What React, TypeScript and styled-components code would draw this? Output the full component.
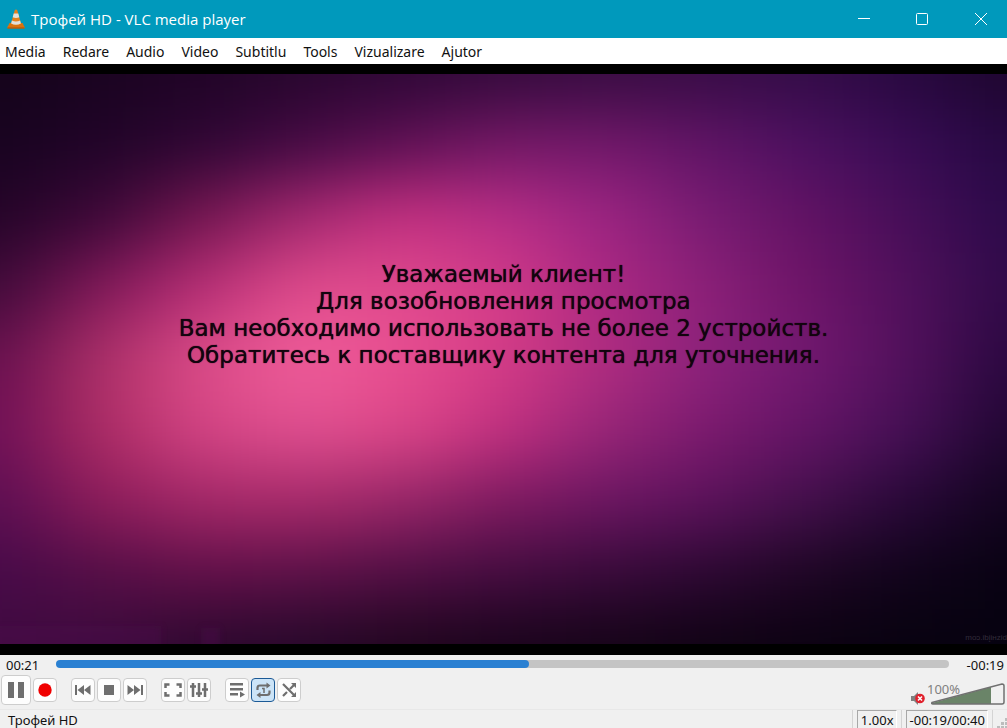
import React from "react";
import styled, { createGlobalStyle } from "styled-components";

const GlobalStyle = createGlobalStyle`
  *, *::before, *::after { box-sizing: border-box; }
  body { margin: 0; background: #f0f0f0; }
`;

const uiFont = `"Noto Sans", "Open Sans", sans-serif`;

const Shell = styled.div`
  display: flex;
  flex-direction: column;
  height: 100vh;
  overflow: hidden;
  background: #f0f0f0;
`;

const TitleBar = styled.header`
  display: flex;
  align-items: center;
  flex: none;
  height: 38px;
  padding-left: 7px;
  background: #0099bc;
  color: #fff;
  font-family: "Open Sans", "Noto Sans", sans-serif;
`;

const Title = styled.h1`
  flex: 1;
  margin: 0 0 0 6px;
  font-size: 15px;
  font-weight: 400;
  line-height: 20px;
`;

const WindowButton = styled.button`
  display: grid;
  place-items: center;
  width: 58px;
  height: 38px;
  padding: 0;
  border: 0;
  background: transparent;
  color: #fff;
  &:last-child { width: 56px; padding-left: 4px; }
`;

const MenuBar = styled.nav`
  display: flex;
  align-items: center;
  flex: none;
  gap: 17px;
  height: 26px;
  padding: 2px 0 0 5px;
  background: #fff;
`;

const MenuItem = styled.button`
  padding: 0;
  border: 0;
  background: transparent;
  color: #111;
  font: 14px/20px ${uiFont};
`;

const Stage = styled.main`
  display: flex;
  flex: 1;
  min-height: 0;
  padding: 10px 0 11px;
  background: #000;
`;

const Video = styled.section`
  position: relative;
  flex: 1;
  overflow: hidden;
  background: #2a0632;
`;

const Backdrop = styled.svg`
  position: absolute;
  inset: 0;
  width: 100%;
  height: 100%;
`;

const Message = styled.p`
  position: relative;
  margin: 0;
  padding-top: 187px;
  color: #12040e;
  font: 23px/27px "DejaVu Sans", sans-serif;
  text-align: center;
  text-shadow: 0 0 1px #12040e;
`;

const Watermark = styled.span`
  position: absolute;
  right: 0;
  bottom: 0;
  color: #322c3a;
  font: 8px/12px "Liberation Sans", sans-serif;
`;

const SeekRow = styled.div`
  display: flex;
  align-items: center;
  flex: none;
  height: 20px;
  padding: 0 3px 0 6px;
  color: #111;
  font: 13px/18px ${uiFont};
`;

const SeekSlider = styled.input<{ $value: number }>`
  appearance: none;
  flex: 1;
  height: 8px;
  margin: 0 18px 2px 17px;
  border-radius: 4px;
  background: linear-gradient(
    to right,
    #2a80d2 ${(p) => p.$value}%,
    #c4c4c4 ${(p) => p.$value}%
  );
  &::-webkit-slider-thumb {
    appearance: none;
    width: 8px;
    height: 8px;
    border-radius: 0 4px 4px 0;
    background: #2a80d2;
  }
`;

const Controls = styled.div`
  display: flex;
  align-items: center;
  flex: none;
  gap: 14px;
  height: 30px;
  padding: 0 2px 0 1px;
`;

const Group = styled.div`
  display: flex;
  align-items: center;
  gap: 2px;
`;

const ToolButton = styled.button<{ $large?: boolean; $active?: boolean }>`
  display: grid;
  place-items: center;
  width: ${(p) => (p.$large ? 30 : 24)}px;
  height: ${(p) => (p.$large ? 30 : 24)}px;
  padding: 0;
  border: 1px solid ${(p) => (p.$active ? "#1c5a96" : "#cdcdcd")};
  border-radius: 4px;
  background: ${(p) => (p.$active ? "#cce4f7" : "#fdfdfd")};
  color: #6e6e6e;
`;

const Volume = styled.div`
  display: flex;
  align-items: flex-end;
  align-self: flex-end;
  gap: 6px;
  margin-left: auto;
`;

const MuteButton = styled.button`
  display: block;
  padding: 0;
  border: 0;
  background: transparent;
  line-height: 0;
`;

const VolumeMeter = styled.label`
  position: relative;
  width: 74px;
  height: 24px;
`;

const VolumeText = styled.span`
  position: absolute;
  left: -4px;
  top: 0;
  color: #808080;
  font: 13px/16px ${uiFont};
`;

const VolumeSlider = styled.input`
  position: absolute;
  inset: 0;
  width: 100%;
  height: 100%;
  margin: 0;
  opacity: 0;
`;

const VolumeShape = styled.svg`
  position: absolute;
  inset: 0;
`;

const StatusBar = styled.footer`
  display: flex;
  flex: none;
  height: 19px;
  margin-top: 4px;
  border-top: 1px solid #e8e8e8;
  color: #111;
  font: 13px/18px ${uiFont};
  white-space: nowrap;
`;

const StatusTitle = styled.span`
  flex: 1;
  padding: 1px 0 0 8px;
`;

const StatusDivider = styled.i`
  width: 1px;
  margin-right: 4px;
  background: #d4d4d4;
`;

const StatusBox = styled.output`
  margin-right: 4px;
  padding: 0 2px 0 3px;
  border: 1px solid #a8a8a8;
  border-right-color: #fff;
  border-bottom: 0;
`;

/* Colours of the still frame on an even grid, blended together by blur. */
const frame = [
  "14041a 1a0420 200426 28062e 2e0736 340a3c 380c42 380c46 340c48 280840 1e062e",
  "180420 200428 2e0634 450a44 5e1054 741866 72186a 601466 4c1060 380c54 260842",
  "240428 3c0838 741650 a42870 c43080 b82e86 9c2482 781c72 621264 460e58 2c0a4a",
  "400a3a 801858 b82e76 e04c8c e04a8e d23a88 ac2882 8c2078 6e1468 50105c 300a48",
  "68104e ac3068 dc4c88 f05e9a e84e90 d43c86 b02c80 8c227c 721870 52105c 2a0840",
  "701056 ac2c64 d44484 e05090 dc4688 c23080 982678 7c1a6e 641466 461056 200632",
  "5c0e52 8c1c5a a42868 a82a6a 982668 7e1a60 6c1662 5c125c 44104c 280838 12041e",
  "460a48 540e46 600f48 5c1048 500e44 440c40 380a3a 2c0832 1e0624 10041a 080212",
  "400a40 3c0a3c 2c082e 26082a 20061e 1a041c 160418 100314 0c0212 080210 060210",
].map((row) => row.split(" "));

const clampEdge = <T,>(list: T[]) => [list[0], ...list, list[list.length - 1]];

function FrameArt() {
  return (
    <Backdrop viewBox="0 0 1000 568" preserveAspectRatio="none" aria-hidden="true">
      <filter
        id="blend"
        filterUnits="userSpaceOnUse"
        x="-150"
        y="-110"
        width="1300"
        height="790"
        colorInterpolationFilters="sRGB"
      >
        <feGaussianBlur stdDeviation="42 31" />
      </filter>
      <filter id="soften"><feGaussianBlur stdDeviation="3" /></filter>
      <g filter="url(#blend)" shapeRendering="crispEdges">
        {clampEdge(frame).map((row, r) =>
          clampEdge(row).map((c, i) => (
            <rect
              key={`${r}-${i}`}
              x={(i - 1) * 100 - 50}
              y={(r - 1) * 71 - 36}
              width="101"
              height="72"
              fill={`#${c}`}
            />
          ))
        )}
      </g>
      <path d="M-20 550h180v40H-20zM200 552h18v30h-18z" fill="#4c0e4c" opacity=".4" filter="url(#soften)" />
    </Backdrop>
  );
}

const Cone = () => (
  <svg width="18" height="20" viewBox="0 0 18 20" aria-hidden="true">
    <path d="M2.500 14h13l2.300 4.500q0 1-1 1H1.200q-1 0-1-1z" fill="#d9730f" />
    <path d="M.5 18.500h17v1H.5z" fill="#a9540a" />
    <path d="M7.800 1q1.200-.8 2.400 0L14 14.500q-5 3-10 0z" fill="#e5821c" />
    <path d="M6.700 4.500h4.600l1 3.800q-3.300 1.400-6.600 0zM4.900 11.500q4.100 1.800 8.200 0l.8 3q-4.900 2.400-9.800 0z" fill="#e2e0da" />
  </svg>
);

const icons = {
  pause: (
    <svg width="18" height="18" fill="currentColor">
      <path d="M1 1h6v16H1zM11 1h6v16h-6z" />
    </svg>
  ),
  record: (
    <svg width="14" height="14"><circle cx="7" cy="7" r="6.700" fill="#f00000" /></svg>
  ),
  prev: (
    <svg width="16" height="10" fill="currentColor">
      <path d="M0 0h2v10H0zM9 0v10L2.500 5zM15.500 0v10L9 5z" />
    </svg>
  ),
  stop: (
    <svg width="10" height="10" fill="currentColor"><path d="M0 0h10v10H0z" /></svg>
  ),
  next: (
    <svg width="16" height="10" fill="currentColor">
      <path d="M14 0h2v10h-2zM7 0v10l6.500-5zM.5 0v10L7 5z" />
    </svg>
  ),
  full: (
    <svg width="18" height="14" fill="none" stroke="currentColor" strokeWidth="2.500">
      <path d="M1.500 5V1.500h4M12.500 1.500h4V5M16.500 9v3.500h-4M5.500 12.500h-4V9" />
    </svg>
  ),
  mixer: (
    <svg width="18" height="14" fill="none" stroke="currentColor" strokeWidth="2.500">
      <path d="M3 0v14M9 0v14M15 0v14" />
      <path d="M0 3.500h6M6 10.500h6M12 6.500h6" />
    </svg>
  ),
  list: (
    <svg width="16" height="16" fill="currentColor">
      <path d="M1 1h13v2.500H1zM1 6h13v2.500H1zM1 11h8v2.500H1zM11 9.500l5 3-5 3z" />
    </svg>
  ),
  loop: (
    <svg width="18" height="18" fill="none" stroke="currentColor" strokeWidth="2.200">
      <path d="M3.500 9V7q0-2.500 2.500-2.500h8M15.500 9.500v2q0 2.500-2.500 2.500H5" />
      <path d="M8 7.500h2v4.500" strokeWidth="1.500" />
      <path d="M12.500 1.500l4 3-4 3zM6.500 11l-4 3 4 3z" fill="currentColor" stroke="none" />
    </svg>
  ),
  shuffle: (
    <svg width="14" height="14" fill="none" stroke="currentColor" strokeWidth="2.200">
      <path d="M1 1l11 11M1 13l4-4M8 6l4-4" />
      <path d="M9 0h5v5zM14 9v5H9z" fill="currentColor" stroke="none" />
    </svg>
  ),
};

type ToolProps = { icon: keyof typeof icons; label: string; large?: boolean; active?: boolean };
const Tool = ({ icon, label, large, active }: ToolProps) => (
  <ToolButton type="button" aria-label={label} aria-pressed={active} $large={large} $active={active}>
    {icons[icon]}
  </ToolButton>
);

const menus = ["Media", "Redare", "Audio", "Video", "Subtitlu", "Tools", "Vizualizare", "Ajutor"];
const position = 52.5;

export default function App() {
  return (
    <Shell>
      <GlobalStyle />
      <TitleBar>
        <Cone />
        <Title>Трофей HD - VLC media player</Title>
        <WindowButton type="button" aria-label="Minimize">
          <svg width="12" height="12" stroke="currentColor"><path d="M0 5.500h12" /></svg>
        </WindowButton>
        <WindowButton type="button" aria-label="Maximize">
          <svg width="12" height="12" fill="none" stroke="currentColor"><rect x=".5" y=".5" width="11" height="11" rx="1" /></svg>
        </WindowButton>
        <WindowButton type="button" aria-label="Close">
          <svg width="12" height="12" stroke="currentColor"><path d="M0 0l12 12M12 0L0 12" /></svg>
        </WindowButton>
      </TitleBar>
      <MenuBar>
        {menus.map((m) => <MenuItem key={m} type="button">{m}</MenuItem>)}
      </MenuBar>
      <Stage>
        <Video>
          <FrameArt />
          <Message>
            Уважаемый клиент!<br />
            Для возобновления просмотра<br />
            Вам необходимо использовать не более 2 устройств.<br />
            Обратитесь к поставщику контента для уточнения.
          </Message>
          <Watermark>moɔ.ibįiʜzid</Watermark>
        </Video>
      </Stage>
      <SeekRow>
        <span>00:21</span>
        <SeekSlider type="range" aria-label="Position" min={0} max={100} step="any" defaultValue={position} $value={position} />
        <span>-00:19</span>
      </SeekRow>
      <Controls>
        <Group>
          <Tool icon="pause" label="Pause" large />
          <Tool icon="record" label="Record" />
        </Group>
        <Group>
          <Tool icon="prev" label="Previous" />
          <Tool icon="stop" label="Stop" />
          <Tool icon="next" label="Next" />
        </Group>
        <Group>
          <Tool icon="full" label="Fullscreen" />
          <Tool icon="mixer" label="Extended settings" />
        </Group>
        <Group>
          <Tool icon="list" label="Playlist" />
          <Tool icon="loop" label="Loop" active />
          <Tool icon="shuffle" label="Random" />
        </Group>
        <Volume>
          <MuteButton type="button" aria-label="Mute">
            <svg width="14" height="13">
              <path d="M0 4h3l4-4v13L3 9H0z" fill="#808080" />
              <circle cx="9" cy="6.500" r="4.800" fill="#e0202c" />
              <path d="M7 4.500l4 4M11 4.500l-4 4" stroke="#fff" strokeWidth="1.500" />
            </svg>
          </MuteButton>
          <VolumeMeter>
            <VolumeShape width="74" height="24" aria-hidden="true">
              <path d="M1 22L60 6v17H1z" fill="#6a8468" />
              <path d="M1 21.500L71 3q2 0 2 2v16q0 2-2 2H2q-2 0-1-1.500z" fill="none" stroke="#707070" strokeWidth="1.500" />
            </VolumeShape>
            <VolumeText>100%</VolumeText>
            <VolumeSlider type="range" aria-label="Volume" min={0} max={125} defaultValue={100} />
          </VolumeMeter>
        </Volume>
      </Controls>
      <StatusBar>
        <StatusTitle>Трофей HD</StatusTitle>
        <StatusDivider />
        <StatusBox>1.00x</StatusBox>
        <StatusDivider />
        <StatusBox>-00:19/00:40</StatusBox>
        <StatusDivider />
        <svg width="10" height="18" fill="#bdbdbd" aria-hidden="true">
          <path d="M8 8h3v3H8zM4 12h3v3H4zM8 12h3v3H8zM0 16h3v2H0zM4 16h3v2H4zM8 16h3v2H8z" />
        </svg>
      </StatusBar>
    </Shell>
  );
}
